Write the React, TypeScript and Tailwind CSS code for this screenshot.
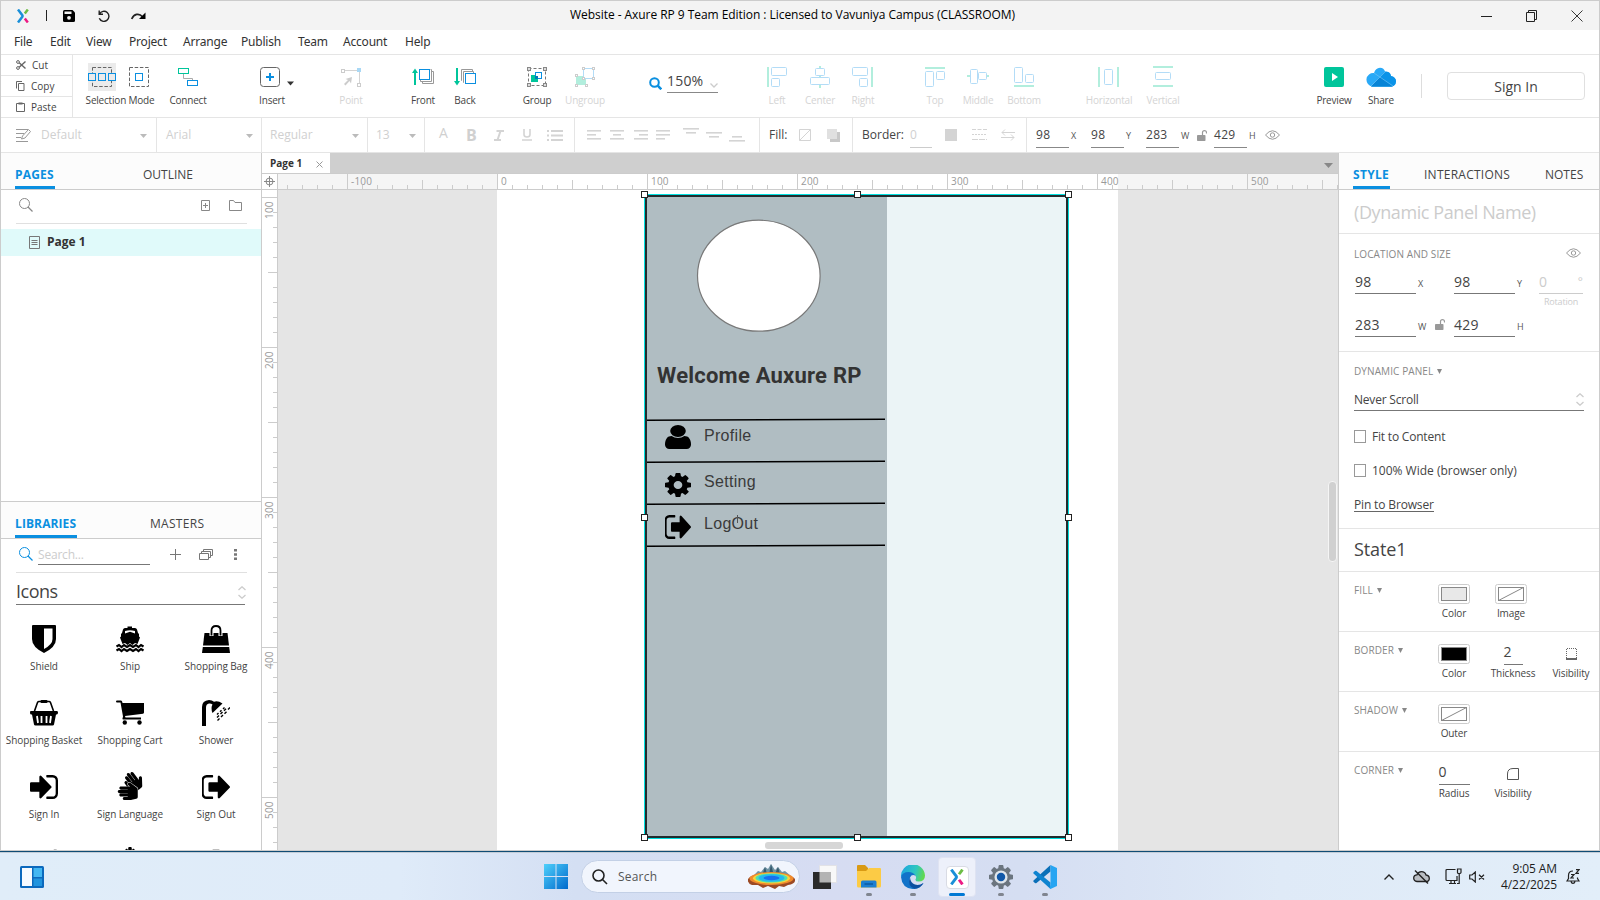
import type { ReactNode } from "react";
import { FaSignLanguage, FaSignal, FaSnowflake, FaSitemap } from "react-icons/fa";

const USER =
  "M1536 1399q0 109-62.5 187t-150.5 78h-854q-88 0-150.5-78t-62.5-187q0-85 8.5-160.5t31.5-152 58.5-131 94-89 134.5-34.5q131 128 313 128t313-128q76 0 134.5 34.5t94 89 58.5 131 31.5 152 8.5 160.5zm-256-887q0 159-112.5 271.5t-271.5 112.5-271.5-112.5-112.5-271.5 112.5-271.5 271.5-112.5 271.5 112.5 112.5 271.5z";
const COG =
  "M1152 896q0-106-75-181t-181-75-181 75-75 181 75 181 181 75 181-75 75-181zm512-109v222q0 12-8 23t-20 13l-185 28q-19 54-39 91 35 50 107 138 10 12 10 25t-9 23q-27 37-99 108t-94 71q-12 0-26-9l-138-108q-44 23-91 38-16 136-29 186-7 28-36 28h-222q-14 0-24.5-8.5t-11.5-21.5l-28-184q-49-16-90-37l-141 107q-10 9-25 9-14 0-25-11-126-114-165-168-7-10-7-23 0-12 8-23 15-21 51-66.5t54-70.5q-27-50-41-99l-183-27q-13-2-21-12.5t-8-23.5v-222q0-12 8-23t19-13l186-28q14-46 39-92-40-57-107-138-10-12-10-24 0-10 9-23 26-36 98.5-107.5t94.5-71.5q13 0 26 10l138 107q44-23 91-38 16-136 29-186 7-28 36-28h222q14 0 24.5 8.5t11.5 21.5l28 184q49 16 90 37l142-107q9-9 24-9 13 0 25 10 129 119 165 170 7 8 7 22 0 12-8 23-15 21-51 66.5t-54 70.5q26 50 41 98l183 28q13 2 21 12.5t8 23.5z";
const SIGN_OUT =
  "M704 1440q0 4 1 20t.5 26.5-3 23.5-10 19.5-20.5 6.5h-320q-119 0-203.5-84.5t-84.5-203.5v-704q0-119 84.5-203.5t203.5-84.5h320q13 0 22.5 9.5t9.5 22.5q0 4 1 20t.5 26.5-3 23.5-10 19.5-20.5 6.5h-320q-66 0-113 47t-47 113v704q0 66 47 113t113 47h312l11.5 1 11.5 3 8 5.5 7 9 2 13.5zm928-544q0 26-19 45l-544 544q-19 19-45 19t-45-19-19-45v-288h-448q-26 0-45-19t-19-45v-384q0-26 19-45t45-19h448v-288q0-26 19-45t45-19 45 19l544 544q19 19 19 45z";
const SIGN_IN =
  "M1312 896q0 26-19 45l-544 544q-19 19-45 19t-45-19-19-45v-288h-448q-26 0-45-19t-19-45v-384q0-26 19-45t45-19h448v-288q0-26 19-45t45-19 45 19l544 544q19 19 19 45zm352-352v704q0 119-84.5 203.5t-203.5 84.5h-320q-13 0-22.5-9.5t-9.5-22.5q0-4-1-20t-.5-26.5 3-23.5 10-19.5 20.5-6.5h320q66 0 113-47t47-113v-704q0-66-47-113t-113-47h-312l-11.5-1-11.5-3-8-5.5-7-9-2-13.5q0-4-1-20t-.5-26.5 3-23.5 10-19.5 20.5-6.5h320q119 0 203.5 84.5t84.5 203.5z";

function Glyph({ d, box, className }: { d: string; box: string; className: string }) {
  return (
    <svg viewBox={box} preserveAspectRatio="none" className={className} fill="currentColor">
      <path d={d} />
    </svg>
  );
}

function AxureMark({ className }: { className: string }) {
  return (
    <svg viewBox="0 0 12 14" className={className} fill="none" strokeWidth="2.5">
      <path d="M1 0.5L5.3 6.2Q5.8 7 5.3 7.8L1 13.5" stroke="#1a8fd8" />
      <path d="M10.8 0.5L7.8 4.6" stroke="#6cbd45" />
      <path d="M7.8 9.4L10.8 13.5" stroke="#ec1a84" />
    </svg>
  );
}

/* ---------- title + menu ---------- */

function TitleBar() {
  return (
    <div className="relative flex h-[29px] shrink-0 items-center bg-[#f3f3f3]">
      <AxureMark className="ml-4 h-[14px] w-3" />
      <div className="ml-[17px] h-[11px] w-px bg-[#222]" />
      <svg viewBox="0 0 12 12" className="ml-4 h-3 w-3">
        <path d="M1.5 0H9.5L12 2.5V10.5Q12 12 10.5 12H1.5Q0 12 0 10.5V1.5Q0 0 1.5 0Z" fill="#000" />
        <rect x="1.5" y="1.5" width="7" height="2.5" fill="#f3f3f3" />
        <circle cx="6" cy="7.8" r="1.9" fill="#f3f3f3" />
      </svg>
      <svg viewBox="0 0 12 12" className="ml-[23px] h-3 w-3" fill="none" stroke="#222" strokeWidth="1.4">
        <path d="M1.2 0.5V4.2H5M1.5 4A5 5 0 1 1 1.3 8.2" />
      </svg>
      <svg viewBox="0 0 15 8" className="ml-[21px] h-2 w-[15px]">
        <path d="M0.7 7C3 2 8 0.6 11.5 4.8" fill="none" stroke="#222" strokeWidth="1.7" />
        <path d="M14.5 0.5V7H8Z" fill="#000" />
      </svg>
      <div className="absolute inset-x-0 top-[6px] flex justify-center pr-[15px] text-[12px] leading-[16px] tracking-[-0.05px] text-black">
        Website - Axure RP 9 Team Edition : Licensed to Vavuniya Campus (CLASSROOM)
      </div>
      <svg viewBox="0 0 102 12" className="mr-[16px] ml-auto h-3 w-[102px]" fill="none" stroke="#222">
        <path d="M0 6.5H11" />
        <path d="M45.5 2.5H53.5V11.5H45.5ZM47.5 2.5V0.5H55.5V9.5H53.5" />
        <path d="M90.5 0.5L101.5 11.5M101.5 0.5L90.5 11.5" strokeWidth="0.9" />
      </svg>
    </div>
  );
}

const MENU: [string, string][] = [
  ["File", "w-9"],
  ["Edit", "w-9"],
  ["View", "w-[43px]"],
  ["Project", "w-[54px]"],
  ["Arrange", "w-[58px]"],
  ["Publish", "w-[57px]"],
  ["Team", "w-[45px]"],
  ["Account", "w-[62px]"],
  ["Help", "w-10"],
];

function MenuBar() {
  return (
    <div className="flex h-[25px] shrink-0 items-center border-b border-[#e5e5e5] pl-[13px] text-[12px] leading-4 tracking-[-0.2px] text-[#333]">
      {MENU.map(([m, w]) => (
        <div key={m} className={`${w} font-['Noto_Sans']`}>
          {m}
        </div>
      ))}
    </div>
  );
}

/* ---------- toolbar ---------- */

function Tool({ label, ml, off, w = "w-10", children }: { label: string; ml: string; off?: boolean; w?: string; children: ReactNode }) {
  return (
    <div className={`flex ${w} ${ml} shrink-0 flex-col items-center pt-2`}>
      <div className="flex h-7 items-center justify-center">{children}</div>
      <div className={`mt-[2px] text-[10px] leading-[14px] tracking-[-0.2px] whitespace-nowrap ${off ? "text-[#d4d4d4]" : "text-[#444]"}`}>
        {label}
      </div>
    </div>
  );
}

const B = "#b3dcf7";
const G = "#b2eedd";

function AlignIcon({ bars, boxes }: { bars: number[][]; boxes: number[][] }) {
  return (
    <svg viewBox="0 0 22 22" className="h-[22px] w-[22px] shrink-0">
      {bars.map(([x, y, w, h], i) => (
        <rect key={i} x={x} y={y} width={w} height={h} fill={G} />
      ))}
      {boxes.map(([x, y, w, h], i) => (
        <rect key={i} x={x + 0.5} y={y + 0.5} width={w - 1} height={h - 1} rx="1" fill="#fff" stroke={B} />
      ))}
    </svg>
  );
}

function Toolbar() {
  return (
    <div className="flex h-[63px] shrink-0 border-b border-[#e5e5e5]">
      <div className="flex w-[72px] flex-col border-r border-[#e5e5e5] text-[10px] leading-none text-[#444]">
        <div className="flex h-[21px] items-center border-b border-[#e5e5e5] pb-px pl-[15px]">
          <svg viewBox="0 0 10 10" className="h-[10px] w-[10px]" fill="none" stroke="#666">
            <circle cx="2" cy="2" r="1.4" />
            <circle cx="2" cy="8" r="1.4" />
            <path d="M3.2 2.8L9.5 8.6M3.2 7.2L9.5 1.4" strokeWidth="1.4" />
          </svg>
          <span className="ml-[6px]">Cut</span>
        </div>
        <div className="flex h-[21px] items-center border-b border-[#e5e5e5] pb-px pl-[15px]">
          <svg viewBox="0 0 9 10" className="h-[10px] w-[9px]" fill="none" stroke="#666">
            <path d="M0.5 7.5V0.5H6M2.5 2.5H8V9.5H2.5Z" />
          </svg>
          <span className="ml-[6px]">Copy</span>
        </div>
        <div className="flex h-[20px] items-center pb-px pl-[15px]">
          <svg viewBox="0 0 9 10" className="h-[10px] w-[9px]" fill="none" stroke="#666">
            <path d="M0.5 1.5H8.5V9.5H0.5Z" />
            <path d="M2.5 1.5H6.5" strokeWidth="2" />
          </svg>
          <span className="ml-[6px]">Paste</span>
        </div>
      </div>

      <Tool label="Selection Mode" ml="ml-0" w="w-[94px]">
        <svg viewBox="0 0 62 28" className="mr-[2px] h-7 w-[62px]" fill="none">
          <rect width="28" height="28" fill="#ebebeb" />
          <rect x="4.5" y="4.5" width="19" height="19" stroke="#666" strokeDasharray="3.5 1.7" />
          <g stroke="#0a8fe0" fill="#ebebeb">
            <rect x="0.5" y="10.5" width="7" height="7" />
            <rect x="10.5" y="10.5" width="7" height="7" />
            <rect x="20.5" y="10.5" width="7" height="7" />
          </g>
          <rect x="41.5" y="4.5" width="19" height="19" stroke="#666" strokeDasharray="3.5 1.7" />
          <rect x="47.5" y="10.5" width="7" height="7" stroke="#0a8fe0" />
        </svg>
      </Tool>
      <Tool label="Connect" ml="ml-[1px]">
        <svg viewBox="0 0 20 18" className="h-[18px] w-5" fill="none">
          <path d="M5.5 6V10.5H14.5V13" stroke="#aaa" />
          <rect x="0.5" y="0.5" width="10" height="5" stroke="#00c59b" />
          <rect x="9.5" y="12.5" width="10" height="5" stroke="#0a8fe0" />
        </svg>
      </Tool>
      <Tool label="Insert" ml="ml-[44px]">
        <svg viewBox="0 0 38 20" className="ml-[14px] h-5 w-[38px] shrink-0" fill="none">
          <rect x="0.5" y="0.5" width="19" height="19" rx="3" stroke="#666" />
          <path d="M6 10H14M10 6V14" stroke="#0a8fe0" strokeWidth="2" />
          <path d="M27 14.5H34L30.5 18.5Z" fill="#333" />
        </svg>
      </Tool>
      <Tool label="Point" ml="ml-[39px]" off>
        <svg viewBox="0 0 21 19" className="h-[19px] w-[21px]" fill="none">
          <path d="M4 2.5H17M18.5 4V15" stroke="#d4d4d4" />
          <rect x="0.5" y="1.5" width="3" height="3" stroke="#ccc" />
          <rect x="16.5" y="15.5" width="3" height="3" stroke="#ccc" />
          <rect x="16" y="0" width="4" height="4" fill="#a9d8f5" />
          <path d="M3 16L7 12L4.5 11L11 9L10 15.5L8.5 13L4.5 17.5Z" fill="#ccc" />
        </svg>
      </Tool>
      <Tool label="Front" ml="ml-[32px]">
        <svg viewBox="0 0 22 18" className="h-[18px] w-[22px]" fill="none">
          <path d="M3 17V4" stroke="#00c59b" strokeWidth="2" />
          <path d="M0 5L3 0.5L6 5Z" fill="#00c59b" />
          <path d="M19.5 3.5H21.5V15.5H10.5V13.5M18.5 1.5H19.5V13.5H8.5V12" stroke="#999" />
          <rect x="7.5" y="1.5" width="10" height="10" fill="#fff" stroke="#0a8fe0" />
        </svg>
      </Tool>
      <Tool label="Back" ml="ml-[2px]">
        <svg viewBox="0 0 22 18" className="h-[18px] w-[22px]" fill="none">
          <path d="M3 0V14" stroke="#00c59b" strokeWidth="2" />
          <path d="M0 13L3 17.5L6 13Z" fill="#00c59b" />
          <path d="M8 12.5H7.5V1.5H18.5V3M10 14.5H9.5V3.5H19.5V5" stroke="#999" />
          <rect x="11.5" y="5.5" width="10" height="10" fill="#fff" stroke="#0a8fe0" />
        </svg>
      </Tool>
      <Tool label="Group" ml="ml-[32px]">
        <svg viewBox="0 0 20 20" className="h-5 w-5" fill="none">
          <rect x="1.5" y="1.5" width="17" height="17" stroke="#777" strokeDasharray="3 2" />
          <g fill="#ddd" stroke="#888">
            <rect x="0.5" y="0.5" width="3" height="3" />
            <rect x="16.5" y="0.5" width="3" height="3" />
            <rect x="0.5" y="16.5" width="3" height="3" />
            <rect x="16.5" y="16.5" width="3" height="3" />
          </g>
          <rect x="4" y="8" width="7" height="7" fill="#00c59b" />
          <rect x="8.5" y="5.5" width="6" height="6" fill="#fff" stroke="#0a8fe0" />
          <rect x="8" y="9" width="3" height="3" fill="#007bb8" />
        </svg>
      </Tool>
      <Tool label="Ungroup" ml="ml-[8px]" off>
        <svg viewBox="0 0 20 20" className="h-5 w-5" fill="none">
          <rect x="1" y="9" width="10" height="9" fill={G} />
          <rect x="8.5" y="1.5" width="10" height="10" fill="#fff" stroke={B} />
          <g fill="#fff" stroke="#ccc">
            <rect x="7.5" y="0.5" width="2" height="2" />
            <rect x="17.5" y="0.5" width="2" height="2" />
            <rect x="17.5" y="10.5" width="2" height="2" />
            <rect x="7.5" y="10.5" width="2" height="2" />
            <rect x="0.5" y="7.5" width="2" height="2" />
            <rect x="0.5" y="17.5" width="2" height="2" />
            <rect x="10.5" y="17.5" width="2" height="2" />
          </g>
        </svg>
      </Tool>

      <div className="ml-[44px] flex w-[70px] shrink-0 pt-[15px]">
        <svg viewBox="0 0 13 13" className="mt-[7px] h-[13px] w-[13px] shrink-0" fill="none" stroke="#0a8fe0">
          <circle cx="5.5" cy="5.5" r="4.3" strokeWidth="2" />
          <path d="M8.7 8.7L12.3 12.3" strokeWidth="2.5" />
        </svg>
        <div className="ml-[5px] flex h-[23px] w-[51px] items-center border-b border-[#888] text-[14px] leading-none tracking-[0.2px] text-[#444]">
          <span>150%</span>
          <svg viewBox="0 0 8 5" className="mt-2 ml-auto h-[5px] w-2" fill="none" stroke="#ccc" strokeWidth="1.3">
            <path d="M0.5 0.5L4 4L7.5 0.5" />
          </svg>
        </div>
      </div>

      <Tool label="Left" ml="ml-[38px]" off>
        <AlignIcon bars={[[1, 1, 2, 20]]} boxes={[[5, 1, 16, 9], [5, 12, 9, 9]]} />
      </Tool>
      <Tool label="Center" ml="ml-[3px]" off>
        <AlignIcon bars={[[10, 0, 2, 22]]} boxes={[[6, 2, 10, 8], [1, 11, 20, 8]]} />
      </Tool>
      <Tool label="Right" ml="ml-[3px]" off>
        <AlignIcon bars={[[19, 1, 2, 20]]} boxes={[[0, 1, 16, 9], [7, 12, 9, 9]]} />
      </Tool>
      <Tool label="Top" ml="ml-[32px]" off>
        <AlignIcon bars={[[1, 1, 20, 2]]} boxes={[[1, 5, 9, 16], [12, 5, 9, 9]]} />
      </Tool>
      <Tool label="Middle" ml="ml-[3px]" off>
        <AlignIcon bars={[[0, 9, 22, 2]]} boxes={[[3, 3, 8, 15], [11, 6, 9, 8]]} />
      </Tool>
      <Tool label="Bottom" ml="ml-[6px]" off>
        <AlignIcon bars={[[1, 19, 20, 2]]} boxes={[[1, 1, 9, 16], [12, 8, 9, 9]]} />
      </Tool>
      <Tool label="Horizontal" ml="ml-[45px]" off>
        <AlignIcon bars={[[0, 1, 2, 20], [19, 1, 2, 20]]} boxes={[[6, 3, 9, 16]]} />
      </Tool>
      <Tool label="Vertical" ml="ml-[14px]" off>
        <AlignIcon bars={[[1, 0, 20, 2], [1, 19, 20, 2]]} boxes={[[3, 6, 16, 8]]} />
      </Tool>
      <Tool label="Preview" ml="ml-[131px]">
        <svg viewBox="0 0 20 20" className="h-5 w-5">
          <rect width="20" height="20" rx="2" fill="#00c59b" />
          <path d="M8 6L14 10L8 14Z" fill="#fff" />
        </svg>
      </Tool>
      <Tool label="Share" ml="ml-[7px]">
        <svg viewBox="0 0 30 20" className="h-5 w-[30px]">
          <path d="M6.5 19.5A6.5 6.5 0 0 1 8 6Q9.500 1 14 0.800Q18 1 19 4.600Q24 4.500 25 9Q30 10 30 14.500Q29.500 19 25.500 19.500Z" fill="#29a9f7" />
          <path d="M5 19.5L18.5 5Q24 4 25 9Q30 10 30 14.5Q29.5 19 25.5 19.5Z" fill="#0a93e8" />
          <path d="M14 10L27 19.5H5Z" fill="#0784d6" />
          <path d="M8 6L27 19" stroke="#7cc8f5" strokeWidth="0.6" />
          <path d="M5 19L19 5" stroke="#7cc8f5" strokeWidth="0.6" />
        </svg>
      </Tool>
      <div className="mt-[19px] ml-[20px] h-6 w-px shrink-0 bg-[#ddd]" />
      <div className="mt-[17px] ml-[25px] flex h-7 w-[138px] shrink-0 items-center justify-center rounded border border-[#e0e0e0] text-[14px] text-[#444]">
        Sign In
      </div>
    </div>
  );
}

/* ---------- style bar ---------- */

function Caret({ className = "" }: { className?: string }) {
  return (
    <svg viewBox="0 0 7 4" className={`mt-[2px] h-1 w-[7px] shrink-0 ${className}`}>
      <path d="M0 0H7L3.5 4Z" fill="#bbb" />
    </svg>
  );
}

function Lines({ rows, ml }: { rows: number[][]; ml: string }) {
  return (
    <svg viewBox="0 0 16 14" className={`h-[14px] w-4 shrink-0 ${ml}`}>
      {rows.map(([x, y, w], i) => (
        <rect key={i} x={x} y={y} width={w} height="1.6" fill="#d4d4d4" />
      ))}
    </svg>
  );
}

function Lock({ className = "" }: { className?: string }) {
  return (
    <svg viewBox="0 0 10 11" className={`h-[11px] w-[10px] shrink-0 ${className}`}>
      <rect x="0" y="5" width="8.500" height="6" rx="0.8" fill="#999" />
      <path d="M5.5 5V2.5Q5.5 0.7 7.5 0.7T9.5 2.5V3.5" fill="none" stroke="#999" strokeWidth="1.2" />
    </svg>
  );
}

function Eye({ className = "" }: { className?: string }) {
  return (
    <svg viewBox="0 0 15 10" className={`h-[10px] w-[15px] shrink-0 ${className}`} fill="none" stroke="#999">
      <path d="M0.5 5Q7.5 -3.5 14.5 5Q7.5 13.5 0.5 5Z" />
      <circle cx="7.5" cy="5" r="2.2" />
    </svg>
  );
}

function SmallField({ v, u, ml, w }: { v: string; u: string; ml: string; w: string }) {
  return (
    <div className={`flex items-center ${ml} ${w} shrink-0`}>
      <div className="mt-[7px] h-[19px] w-[33px] border-b border-[#888] text-[12px] leading-[12px] tracking-[0.3px] text-[#444]">{v}</div>
      <span className="ml-[2px] text-[9px] leading-none text-[#555]">{u}</span>
    </div>
  );
}

const SEC = "flex h-full shrink-0 items-center border-r border-[#e5e5e5]";

function StyleBar() {
  return (
    <div className="flex h-[35px] shrink-0 items-center border-b border-[#e5e5e5] text-[12px] leading-none text-[#d0d0d0]">
      <div className={`${SEC} w-[156px]`}>
        <svg viewBox="0 0 16 14" className="ml-[15px] h-[14px] w-4" fill="none" stroke="#999">
          <path d="M0 1.5H12M0 5.5H8M0 9.5H5M0 13.5H12" />
          <path d="M5.500 11L6.5 8L12.5 1.5L14.500 3.500L9 10Z" fill="#fff" />
        </svg>
        <span className="-mt-px ml-[9px]">Default</span>
        <Caret className="mr-[9px] ml-auto" />
      </div>
      <div className={`${SEC} w-[105px]`}>
        <span className="-mt-px ml-[9px]">Arial</span>
        <Caret className="mr-[8px] ml-auto" />
      </div>
      <div className={`${SEC} w-[106px]`}>
        <span className="-mt-px ml-[8px]">Regular</span>
        <Caret className="mr-[8px] ml-auto" />
      </div>
      <div className={`${SEC} w-[57px]`}>
        <span className="-mt-px ml-[8px]">13</span>
        <Caret className="mr-[8px] ml-auto" />
      </div>
      <div className={`${SEC} w-[150px] text-[16px]`}>
        <span className="-mt-[4px] ml-[14px] w-[27px] text-[14px]">A</span>
        <span className="w-[28px] text-[16px] font-bold">B</span>
        <svg viewBox="0 0 10 11" className="h-[11px] w-[10px] shrink-0" fill="none" stroke="#d4d4d4" strokeWidth="2">
          <path d="M2.5 1H10M0 10H7M6.5 1L3.5 10" />
        </svg>
        <svg viewBox="0 0 10 12" className="ml-[18px] h-3 w-[10px] shrink-0" fill="none" stroke="#d4d4d4" strokeWidth="1.6">
          <path d="M2 0V5.5Q2 8 5 8T8 5.5V0M0 11H10" />
        </svg>
        <svg viewBox="0 0 16 11" className="ml-[15px] h-[11px] w-4 shrink-0" fill="#d4d4d4">
          <path d="M0 0H2V2H0ZM0 4.5H2V6.5H0ZM0 9H2V11H0ZM4 0H16V2H4ZM4 4.5H16V6.5H4ZM4 9H16V11H4Z" />
        </svg>
      </div>
      <div className={`${SEC} w-[185px]`}>
        <Lines ml="ml-[12px]" rows={[[0, 2, 14], [0, 6, 9], [0, 10, 14]]} />
        <Lines ml="ml-[7px]" rows={[[0, 2, 14], [3, 6, 8], [0, 10, 14]]} />
        <Lines ml="ml-[8px]" rows={[[0, 2, 14], [5, 6, 9], [0, 10, 14]]} />
        <Lines ml="ml-[6px]" rows={[[0, 2, 14], [0, 6, 14], [0, 10, 9]]} />
        <Lines ml="ml-[11px]" rows={[[0, 0, 16], [3, 4, 10]]} />
        <Lines ml="ml-[7px]" rows={[[0, 4, 16], [3, 8, 10]]} />
        <Lines ml="ml-[7px]" rows={[[3, 8, 10], [0, 12, 16]]} />
      </div>
      <div className={`${SEC} w-[93px]`}>
        <span className="ml-[9px] w-[30px] text-[#444]">Fill:</span>
        <svg viewBox="0 0 12 12" className="h-3 w-3" fill="none" stroke="#d4d4d4">
          <path d="M0.5 0.5H11.5V11.5H0.5ZM0.5 11.5L11.5 0.5" />
        </svg>
        <svg viewBox="0 0 13 13" className="ml-[16px] h-[13px] w-[13px]">
          <rect x="3" y="3" width="10" height="10" fill="#c8c8c8" />
          <rect width="10" height="10" fill="#e0e0e0" />
        </svg>
      </div>
      <div className={`${SEC} w-[174px]`}>
        <span className="ml-[9px] w-[48px] text-[#444]">Border:</span>
        <div className="mt-[7px] h-[19px] w-[22px] border-b border-[#ccc] leading-[12px]">0</div>
        <div className="ml-[13px] h-3 w-3 bg-[#d4d4d4]" />
        <svg viewBox="0 0 15 12" className="ml-[15px] h-3 w-[15px]" stroke="#d4d4d4">
          <path d="M0 0.5H15" strokeDasharray="4 1.5" />
          <path d="M0 5.5H15" strokeDasharray="2 1" />
          <path d="M0 10.5H15" strokeDasharray="6 1" />
        </svg>
        <svg viewBox="0 0 14 12" className="ml-[14px] h-3 w-[14px]" fill="none" stroke="#d4d4d4">
          <path d="M14 3.5H1M4 0.5L1 3.5L4 6.5M0 8.5H13M10 5.5L13 8.5L10 11.5" />
        </svg>
      </div>
      <SmallField v="98" u="X" ml="ml-[9px]" w="w-[55px]" />
      <SmallField v="98" u="Y" ml="ml-0" w="w-[55px]" />
      <SmallField v="283" u="W" ml="ml-0" w="w-[51px]" />
      <Lock />
      <SmallField v="429" u="H" ml="ml-[7px]" w="w-[51px]" />
      <Eye />
    </div>
  );
}

/* ---------- left column ---------- */

function Magnifier({ color, className }: { color: string; className: string }) {
  return (
    <svg viewBox="0 0 14 14" className={`h-[14px] w-[14px] shrink-0 ${className}`} fill="none" stroke={color}>
      <circle cx="5.5" cy="5.5" r="5" />
      <path d="M9 9L13.5 13.5" strokeWidth="1.2" />
    </svg>
  );
}

function Spinner({ className = "" }: { className?: string }) {
  return (
    <svg viewBox="0 0 8 13" className={`h-[13px] w-2 shrink-0 ${className}`} fill="none" stroke="#ccc" strokeWidth="1.3">
      <path d="M0.5 4L4 0.8L7.5 4M0.5 9L4 12.2L7.5 9" />
    </svg>
  );
}

function Tab({ label, active, className }: { label: string; active?: boolean; className: string }) {
  return (
    <div className={`flex h-full items-center ${active ? "border-b-[3px] border-[#0a8fe0] pt-[10px] font-bold text-[#0a8fe0]" : "pt-[7px] text-[#444]"} ${className}`}>
      {label}
    </div>
  );
}

const ICONS: { name: string; icon: ReactNode }[] = [
  {
    name: "Shield",
    icon: (
      <svg viewBox="0 0 24 28" className="h-7 w-6">
        <path d="M1 0H23Q24 0 24 1V14Q24 22 12 28Q0 22 0 14V1Q0 0 1 0Z" />
        <path d="M12 3.5H20.5V14Q20.5 19.5 12 24Z" fill="#fff" />
      </svg>
    ),
  },
  {
    name: "Ship",
    icon: (
      <svg viewBox="0 0 28 28" className="h-7 w-7">
        <path d="M11.5 1.5H16V3H19Q20.500 3 21 4.5L22 8L23 9V11.500L24 12.5L21.500 19L19 18L16.500 20L14 18L11.500 20L9 18L6.500 19L4 12.5L5 11.5V9L6 8L7 4.5Q7.500 3 9 3H11.5ZM9 6V8.500L14 6.8L19 8.5V6Q14 4.500 9 6Z" />
        <path d="M0.5 21.5L3 20L5.5 22L8 20L11 22L14 20L17 22L20 20L22.500 22L25 20L27.5 21.5M0.5 25.5L3 24L5.5 26L8 24L11 26L14 24L17 26L20 24L22.5 26L25 24L27.5 25.5" fill="none" stroke="#000" strokeWidth="2.200" />
      </svg>
    ),
  },
  {
    name: "Shopping Bag",
    icon: (
      <svg viewBox="0 0 28 28" className="h-7 w-7">
        <path d="M2.5 8H25.5L27 20.5H1Z" />
        <path d="M0.8 22H27.2L28 28H0Z" />
        <path d="M9.5 11V5.5Q9.5 1 14 1T18.5 5.5V11" fill="none" stroke="#fff" strokeWidth="4" />
        <path d="M9.5 10.5V5.5Q9.5 1 14 1T18.5 5.5V10.5" fill="none" stroke="#000" strokeWidth="1.8" />
      </svg>
    ),
  },
  {
    name: "Shopping Basket",
    icon: (
      <svg viewBox="0 0 28 28" className="h-7 w-7">
        <path d="M4.5 12L7.5 3.5Q8 2.5 9 2.5H19Q20 2.5 20.5 3.5L23.5 12" fill="none" stroke="#000" strokeWidth="1.6" />
        <rect x="10.5" y="1" width="7" height="3" rx="1" />
        <path d="M1 12H27Q28 12 28 13.5T27 15.5H26L24 25.5Q23.8 26.5 22.5 26.5H5.5Q4.2 26.5 4 25.5L2 15.5H1Q0 15.5 0 13.5T1 12Z" />
        <path d="M7 17L8 24M11.5 17V24M16.5 17V24M21 17L20 24" stroke="#fff" strokeWidth="1.8" />
      </svg>
    ),
  },
  {
    name: "Shopping Cart",
    icon: (
      <svg viewBox="0 0 28 28" className="h-7 w-7">
        <path d="M0 2.5Q0 1.5 1 1.5H5Q6 1.5 6.3 3L6.5 4H28V13.5Q28 14.5 27 14.7L9 17L9.5 18.5H25V20.5H7Q6 20 7 17.5L4.5 3.5H1Q0 3.5 0 2.5Z" />
        <circle cx="8.8" cy="23.5" r="2.2" />
        <circle cx="23.5" cy="23.5" r="2.2" />
      </svg>
    ),
  },
  {
    name: "Shower",
    icon: (
      <svg viewBox="0 0 28 28" className="h-7 w-7">
        <path d="M0 27V8Q0 1.5 7 1Q10 1 12 2.8Q15.5 1 20.5 4.5L10.5 14Q8.5 9 10.5 5.5Q9 4.3 7 4.5Q4 5 4 8.5V27Z" />
        <path d="M15 15.500L16.500 14M18 12.800L19.500 11.300M21 10L22.500 8.500M15 18.500L17 16.5M18.500 15L20.5 13M22 11.8L24 9.800M15.5 21.500L17.5 19.5M19 18L21 16M22.500 14.8L24.500 12.8M26 10.5L28 8.5" stroke="#000" strokeWidth="1.4" />
      </svg>
    ),
  },
  { name: "Sign In", icon: <Glyph d={SIGN_IN} box="128 256 1536 1280" className="h-6 w-7" /> },
  { name: "Sign Language", icon: <FaSignLanguage className="-mt-[3px] h-7 w-7" /> },
  { name: "Sign Out", icon: <Glyph d={SIGN_OUT} box="96 256 1536 1280" className="h-6 w-7" /> },
  { name: "", icon: <FaSignal className="h-7 w-7" /> },
  { name: "", icon: <FaSnowflake className="h-7 w-7" /> },
  { name: "", icon: <FaSitemap className="h-7 w-7" /> },
];

function LeftColumn() {
  return (
    <div className="flex w-[261px] shrink-0 flex-col border-r border-[#ccc]">
      <div className="flex h-[37px] shrink-0 border-b border-[#ccc] bg-[#fcfcfc] text-[12px] leading-none">
        <Tab label="PAGES" active className="ml-[14px] w-10 tracking-[0.2px]" />
        <Tab label="OUTLINE" className="ml-[88px]" />
      </div>
      <div className="mr-[14px] ml-[15px] flex h-[34px] shrink-0 border-b border-[#e0e0e0]">
        <Magnifier color="#888" className="mt-2 ml-[3px]" />
        <svg viewBox="0 0 9 11" className="mt-[10px] ml-[168px] h-[11px] w-[9px]" fill="none" stroke="#888">
          <path d="M0.5 0.5H8.5V10.5H0.5ZM2 5.5H7M4.5 3V8" />
        </svg>
        <svg viewBox="0 0 13 11" className="mt-[10px] ml-[19px] h-[11px] w-[13px]" fill="none" stroke="#888">
          <path d="M0.5 0.5H4.5L6 2.5H12.5V10.5H0.5Z" />
        </svg>
      </div>
      <div className="mt-[5px] flex h-[27px] shrink-0 items-center bg-[#e0fafa] pb-px">
        <svg viewBox="0 0 11 13" className="ml-[28px] h-[13px] w-[11px]" fill="none" stroke="#777">
          <path d="M0.5 0.5H10.5V12.5H0.5ZM2.5 4.5H8.5M2.5 6.5H8.5M2.5 8.5H8.5" />
        </svg>
        <span className="ml-[7px] text-[12px] leading-none font-bold text-[#333]">Page 1</span>
      </div>
      <div className="h-[245px] shrink-0" />
      <div className="flex h-[38px] shrink-0 border-y border-[#ccc] bg-[#fcfcfc] text-[12px] leading-none">
        <Tab label="LIBRARIES" active className="ml-[14px] w-[62px] tracking-[0.1px]" />
        <Tab label="MASTERS" className="ml-[73px] tracking-[0.3px]" />
      </div>
      <div className="mr-[14px] ml-[15px] flex h-[34px] shrink-0 border-b border-[#e0e0e0]">
        <Magnifier color="#0a8fe0" className="mt-2 ml-[3px]" />
        <div className="ml-[5px] h-[26px] w-28 border-b border-[#777] pt-2 text-[12px] leading-4 tracking-[-0.2px] text-[#ccc]">Search...</div>
        <svg viewBox="0 0 11 11" className="mt-[10px] ml-5 h-[11px] w-[11px]" stroke="#777">
          <path d="M0 5.5H11M5.5 0V11" />
        </svg>
        <svg viewBox="0 0 14 11" className="mt-[10px] ml-[18px] h-[11px] w-[14px]" fill="none" stroke="#777">
          <path d="M0.5 4.5H9.5V10.5H0.5ZM2.5 4V2.5H11.5V8.5H10M4.5 2V0.5H13.5V6.5H12" />
        </svg>
        <svg viewBox="0 0 3 11" className="mt-[10px] ml-[21px] h-[11px] w-[3px]" fill="#777">
          <path d="M0 0H3V2.5H0ZM0 4.2H3V6.7H0ZM0 8.4H3V11H0Z" />
        </svg>
      </div>
      <div className="mr-4 ml-[15px] flex h-8 shrink-0 items-center border-b border-[#777]">
        <span className="mt-[4px] text-[18px] leading-none tracking-[-0.5px] text-[#444]">Icons</span>
        <Spinner className="mt-[7px] -mr-px ml-auto" />
      </div>
      <div className="grid min-h-0 flex-1 grid-cols-[84px_88px_84px] content-start overflow-hidden pt-[15px] pl-px">
        {ICONS.map((it, i) => (
          <div key={i} className="flex h-[74px] flex-col items-center pt-[5px]">
            <div className="flex h-7 items-center justify-center text-black">{it.icon}</div>
            <div className="mt-[6px] text-[10px] leading-[14px] tracking-[-0.1px] whitespace-nowrap text-[#444]">{it.name}</div>
          </div>
        ))}
      </div>
    </div>
  );
}

/* ---------- canvas ---------- */

const TICKS = Array.from({ length: 80 }, (_, i) => i);

function tickLength(n: number) {
  if (n % 10 === 0) return 15;
  return n % 5 === 0 ? 9 : 4;
}

function HorizontalRuler() {
  return (
    <svg viewBox="278 174 1060 15" className="h-[15px] w-[1060px] shrink-0" shapeRendering="crispEdges">
      <rect x="278" y="174" width="1060" height="15" fill="#f5f5f5" />
      <rect x="497" y="174" width="621" height="15" fill="#fff" />
      {TICKS.map((i) => {
        const n = i - 14;
        const x = 497 + n * 15;
        return x < 1338 ? <rect key={i} x={x} y={189 - tickLength(n)} width="1" height="15" fill="#ccc" /> : null;
      })}
      {[-100, 0, 100, 200, 300, 400, 500].map((v) => (
        <text key={v} x={501 + v * 1.5} y="185" fontSize="10" letterSpacing="0.2" fill="#999">
          {v}
        </text>
      ))}
    </svg>
  );
}

function VerticalRuler() {
  return (
    <svg viewBox="262 190 15 660" className="h-[660px] w-[15px] shrink-0">
      {TICKS.map((n) => {
        const y = 197 + n * 15;
        return y < 850 ? <rect key={n} x={277 - tickLength(n)} y={y} width="15" height="1" fill="#ccc" /> : null;
      })}
      {[100, 200, 300, 400, 500].map((v) => {
        const y = 219 + (v - 100) * 1.5;
        return (
          <text key={v} x="273" y={y} fontSize="10" letterSpacing="0.2" fill="#999" transform={`rotate(-90 273 ${y})`}>
            {v}
          </text>
        );
      })}
    </svg>
  );
}

const ROWS: { label: string; d: string; box: string; top: string; icon: string }[] = [
  { label: "Profile", d: USER, box: "256 128 1280 1536", top: "top-[237px]", icon: "top-[235px]" },
  { label: "Setting", d: COG, box: "128 128 1536 1536", top: "top-[283px]", icon: "top-[283px]" },
  { label: "LogOut", d: SIGN_OUT, box: "96 256 1536 1280", top: "top-[325px]", icon: "top-[325px]" },
];

const HANDLES = [
  "left-[363px] top-[1px]",
  "left-[576px] top-[1px]",
  "left-[787px] top-[1px]",
  "left-[363px] top-[324px]",
  "left-[787px] top-[324px]",
  "left-[363px] top-[644px]",
  "left-[576px] top-[644px]",
  "left-[787px] top-[644px]",
];

function Canvas() {
  return (
    <div className="relative h-[660px] w-[1060px] shrink-0 overflow-hidden bg-[#e5e5e5]">
      <div className="absolute top-0 left-[219px] h-[660px] w-[621px] bg-white" />
      <div className="absolute top-[4px] left-[366px] h-[645px] w-[425px] border border-[#00e0e0] bg-[#222c2e]">
        <div className="absolute inset-x-[2px] top-[2px] bottom-[2px] overflow-hidden bg-[#ebf4f6]">
          <div className="absolute top-0 left-0 h-full w-[240px] bg-[#b0bdc2]" />
          <svg viewBox="647 197 240 360" className="absolute top-0 left-0 h-[360px] w-[240px]" fill="none">
            <ellipse cx="758.8" cy="275.7" rx="61.3" ry="55.5" fill="#fff" stroke="#797979" strokeWidth="1.2" />
            <path d="M647 420.2L885 419.2M647 462.2L885 461.2M647 504.2L885 503.2M647 546.2L885 545.2" stroke="#000" strokeWidth="1.6" />
          </svg>
          <div className="absolute top-[165px] left-[10px] font-['Roboto'] text-[22px] leading-[28px] font-bold tracking-[0.22px] whitespace-nowrap text-[#333]">
            Welcome Auxure RP
          </div>
        </div>
      </div>
      {ROWS.map((r) => (
        <div key={r.label}>
          <Glyph d={r.d} box={r.box} className={`absolute left-[387px] h-6 w-[26px] text-black ${r.icon}`} />
          <div className={`absolute left-[426px] font-['Liberation_Sans'] text-[16px] leading-[18px] tracking-[0.3px] text-[#3a3a3a] ${r.top}`}>{r.label}</div>
        </div>
      ))}
      <div className="absolute top-[325px] left-[459px] h-2 w-px bg-[#555]" />
      {HANDLES.map((h) => (
        <div key={h} className={`absolute h-[7px] w-[7px] border border-[#222] bg-white ${h}`} />
      ))}
      <div className="absolute top-[652px] left-[487px] h-[7px] w-[78px] rounded-[3px] bg-[#d6d6d6]" />
      <div className="absolute top-[291px] left-[1050px] h-[81px] w-[9px] rounded border border-[#f5f5f5] bg-[#d0d0d0]" />
    </div>
  );
}

function Center() {
  return (
    <div className="flex w-[1076px] shrink-0 flex-col">
      <div className="flex h-[20px] shrink-0 items-stretch bg-[#cfcfcf]">
        <div className="flex w-[68px] items-center bg-white">
          <span className="ml-2 text-[10px] leading-none font-bold text-[#333]">Page 1</span>
          <svg viewBox="0 0 7 7" className="mt-[2px] ml-[14px] h-[7px] w-[7px]" stroke="#999">
            <path d="M0.5 0.5L6.5 6.5M6.5 0.5L0.5 6.5" />
          </svg>
        </div>
        <svg viewBox="0 0 9 5" className="mt-[10px] mr-[5px] ml-auto h-[5px] w-[9px]">
          <path d="M0 0H9L4.5 5Z" fill="#888" />
        </svg>
      </div>
      <div className="flex h-[17px] shrink-0 border-t border-b border-[#ccc]">
        <div className="flex h-[15px] w-4 items-center justify-center border-r border-[#ccc]">
          <svg viewBox="0 0 11 11" className="h-[11px] w-[11px]" fill="none" stroke="#888">
            <circle cx="5.5" cy="5.5" r="3.5" />
            <path d="M0 5.5H11M5.5 0V11" />
          </svg>
        </div>
        <HorizontalRuler />
      </div>
      <div className="flex">
        <div className="w-4 border-r border-[#ccc]">
          <VerticalRuler />
        </div>
        <Canvas />
      </div>
    </div>
  );
}

/* ---------- right column ---------- */

function Field({ v, w, unit }: { v: string; w: string; unit: string }) {
  return (
    <div className={`flex shrink-0 items-center ${w}`}>
      <div className="h-[21px] w-[61px] border-b border-[#777] text-[14px] leading-[17px] tracking-[0.2px] text-[#444]">{v}</div>
      <span className="ml-[2px] text-[9px] leading-none text-[#555]">{unit}</span>
    </div>
  );
}

function Heading({ text, className = "" }: { text: string; className?: string }) {
  return (
    <div className={`flex items-center text-[10px] leading-[14px] whitespace-nowrap text-[#888] ${className}`}>
      <span className="tracking-[0.1px]">{text}</span>
      <svg viewBox="0 0 5 5" className="ml-1 h-[5px] w-[5px] shrink-0">
        <path d="M0 0H5L2.5 5Z" fill="#888" />
      </svg>
    </div>
  );
}

function Swatch({ color, slash }: { color: string; slash?: boolean }) {
  return (
    <svg viewBox="0 0 32 20" className="h-5 w-8" fill="none">
      <rect x="0.5" y="0.5" width="31" height="19" rx="2" fill="#fff" stroke="#ccc" />
      <rect x="3.5" y="3.5" width="25" height="13" fill={color} stroke="#888" />
      {slash && <path d="M3.5 16.5L28.5 3.5" stroke="#888" />}
    </svg>
  );
}

function Prop({ label, w, children }: { label: string; w: string; children: ReactNode }) {
  return (
    <div className={`flex shrink-0 flex-col items-center ${w}`}>
      <div className="flex h-[22px] items-center justify-center">{children}</div>
      <div className="mt-px text-[10px] leading-[14px] tracking-[-0.1px] whitespace-nowrap text-[#444]">{label}</div>
    </div>
  );
}

function Section({ title, last, children }: { title: string; last?: boolean; children: ReactNode }) {
  return (
    <div className={`flex h-[60px] shrink-0 pt-[11px] ${last ? "" : "border-b border-[#e5e5e5]"}`}>
      <Heading text={title} className="h-[14px] w-[79px] pl-[15px]" />
      {children}
    </div>
  );
}

function RightColumn() {
  return (
    <div className="flex w-[261px] shrink-0 flex-col border-l border-[#ccc]">
      <div className="flex h-[37px] shrink-0 border-b border-[#ccc] bg-[#fcfcfc] text-[12px] leading-none">
        <Tab label="STYLE" active className="ml-[14px] w-[37px] tracking-[0.3px]" />
        <Tab label="INTERACTIONS" className="ml-[34px] w-[86px] tracking-[0.25px]" />
        <Tab label="NOTES" className="ml-[35px]" />
      </div>
      <div className="flex h-11 shrink-0 items-center border-b border-[#e5e5e5] pl-[15px] text-[18px] leading-none tracking-[-0.4px] whitespace-nowrap text-[#ccc]">
        (Dynamic Panel Name)
      </div>
      <div className="flex h-[118px] shrink-0 flex-col border-b border-[#e5e5e5] pl-[15px]">
        <div className="mt-[12px] flex h-[14px] items-center text-[10px] leading-none tracking-[0.1px] text-[#888]">
          <span className="mt-px">LOCATION AND SIZE</span>
          <Eye className="mr-[18px] ml-auto" />
        </div>
        <div className="mt-[13px] flex h-[21px] pl-[1px]">
          <Field v="98" unit="X" w="w-[99px]" />
          <Field v="98" unit="Y" w="w-[85px]" />
          <div className="relative flex h-[21px] w-[44px] justify-between border-b border-[#ccc] text-[14px] leading-[17px] text-[#ccc]">
            <span>0</span>
            <span className="text-[12px]">°</span>
            <span className="absolute top-[22px] right-0 left-0 text-center text-[9px] leading-[14px] tracking-[-0.2px]">Rotation</span>
          </div>
        </div>
        <div className="mt-[22px] flex h-[21px] items-center pl-[1px]">
          <Field v="283" unit="W" w="w-[80px]" />
          <Lock className="-mt-1 mr-[9px]" />
          <Field v="429" unit="H" w="w-[85px]" />
        </div>
      </div>
      <div className="flex h-[177px] shrink-0 flex-col border-b border-[#e5e5e5] pr-[15px] pl-[15px] text-[12px] leading-none text-[#444]">
        <Heading text="DYNAMIC PANEL" className="mt-[12px]" />
        <div className="mt-[11px] flex h-[22px] items-center border-b border-[#777]">
          <span className="mt-px tracking-[-0.2px]">Never Scroll</span>
          <Spinner className="ml-auto" />
        </div>
        <div className="mt-[19px] flex h-[13px] items-center">
          <div className="h-[13px] w-3 border border-[#999]" />
          <span className="mt-px ml-[6px] tracking-[-0.2px]">Fit to Content</span>
        </div>
        <div className="mt-[21px] flex h-[13px] items-center">
          <div className="h-[13px] w-3 border border-[#999]" />
          <span className="mt-px ml-[6px]">100% Wide (browser only)</span>
        </div>
        <div className="mt-[22px] flex">
          <span className="border-b border-[#666] leading-[12px] tracking-[-0.15px]">Pin to Browser</span>
        </div>
      </div>
      <div className="flex h-[43px] shrink-0 items-center border-b border-[#e5e5e5] pb-[3px] pl-[15px] text-[18px] leading-none tracking-[-0.1px] text-[#444]">
        State1
      </div>
      <Section title="FILL">
        <Prop label="Color" w="ml-5 w-8">
          <Swatch color="#e8e8e8" />
        </Prop>
        <Prop label="Image" w="ml-[25px] w-8">
          <Swatch color="#fff" slash />
        </Prop>
      </Section>
      <Section title="BORDER">
        <Prop label="Color" w="ml-5 w-8">
          <Swatch color="#000" />
        </Prop>
        <Prop label="Thickness" w="ml-[21px] w-[44px]">
          <div className="h-[21px] w-[19px] border-b border-[#777] text-[14px] leading-[16px] text-[#444]">2</div>
        </Prop>
        <Prop label="Visibility" w="ml-[16px] w-[40px]">
          <svg viewBox="0 0 11 12" className="h-3 w-[11px]" fill="none" stroke="#666">
            <path d="M0.5 10V0.5H10.5V10" strokeDasharray="1 1" />
            <path d="M0 11H11" strokeWidth="2" />
          </svg>
        </Prop>
      </Section>
      <Section title="SHADOW">
        <Prop label="Outer" w="ml-5 w-8">
          <Swatch color="#fff" slash />
        </Prop>
      </Section>
      <Section title="CORNER" last>
        <Prop label="Radius" w="ml-5 w-8">
          <div className="h-[21px] w-[31px] border-b border-[#777] text-[14px] leading-[16px] text-[#444]">0</div>
        </Prop>
        <Prop label="Visibility" w="ml-[23px] w-[40px]">
          <svg viewBox="0 0 12 12" className="h-3 w-3" fill="none" stroke="#555">
            <path d="M0.5 11.5V6Q0.5 0.5 6 0.5H11.5V11.5Z" />
          </svg>
        </Prop>
      </Section>
    </div>
  );
}

/* ---------- taskbar ---------- */

function TaskButton({ children, active, dot }: { children: ReactNode; active?: boolean; dot?: boolean }) {
  return (
    <div className={`ml-[6px] flex h-10 w-[38px] shrink-0 flex-col items-center rounded ${active ? "border border-[#dfe3f2] bg-[#edf0fa]" : ""}`}>
      <div className="mt-[7px] flex h-[26px] items-center">{children}</div>
      {(active || dot) && <div className={`mt-[3px] h-[3px] shrink-0 rounded-full ${active ? "w-4 bg-[#0078d4]" : "w-[6px] bg-[#80858f]"}`} />}
    </div>
  );
}

function Taskbar() {
  return (
    <div className="flex h-12 shrink-0 items-center border-t border-[#c3ccd6] bg-[linear-gradient(90deg,#e0edf9_0%,#dfebf9_25%,#d4dff3_36%,#d6dcf2_52%,#d5def2_64%,#dfeaf7_80%,#e2eef9_100%)]">
      <svg viewBox="0 0 24 22" className="ml-5 h-[22px] w-6">
        <rect width="24" height="22" rx="1.5" fill="#0c69bd" />
        <rect x="2" y="2" width="10" height="18" fill="#f7fbff" />
        <rect x="13.5" y="2" width="8.5" height="9" fill="#43b7f2" />
        <rect x="13.5" y="12.5" width="8.5" height="7.5" fill="#2094de" />
      </svg>
      <svg viewBox="0 0 24 25" className="ml-[500px] h-[25px] w-6">
        <defs>
          <linearGradient id="win" x1="0" y1="0" x2="1" y2="1">
            <stop offset="0" stopColor="#4fd0fb" />
            <stop offset="1" stopColor="#0069cc" />
          </linearGradient>
        </defs>
        <path d="M0 0H11.5V12H0ZM12.5 0H24V12H12.5ZM0 13H11.5V25H0ZM12.5 13H24V25H12.5Z" fill="url(#win)" />
      </svg>
      <div className="ml-[13px] flex h-[33px] w-[219px] shrink-0 items-center rounded-full border border-[#c3d0e6] bg-[#f1f5fd]">
        <svg viewBox="0 0 16 16" className="ml-[10px] h-4 w-4" fill="none" stroke="#222" strokeWidth="1.6">
          <circle cx="6.5" cy="6.5" r="5.5" />
          <path d="M10.5 10.5L15 15" />
        </svg>
        <span className="ml-[10px] text-[12px] tracking-[0.2px] text-[#555]">Search</span>
        <svg viewBox="0 0 47 25" className="mr-[4px] ml-auto h-[25px] w-[47px]">
          <path d="M5 12L10 7L13 8L17 3L20 5L23 0L27 6L30 3L34 8L37 7L43 12Z" fill="#6f93a3" />
          <path d="M17 3L19 10L14 12ZM23 0L25 8L21 11ZM30 3L32 10L27 10Z" fill="#35596e" />
          <path d="M0 15Q4 9 23 9T47 15Q48 20 40 21L36 23L31 22L27 25L20 22L15 24L10 21L4 21Q-1 19 0 15Z" fill="#9b4a25" />
          <ellipse cx="23.5" cy="14.5" rx="22" ry="6.5" fill="#f08a2c" />
          <ellipse cx="23.5" cy="14.2" rx="18.5" ry="5.3" fill="#f5d53c" />
          <ellipse cx="23.5" cy="14" rx="16" ry="4.6" fill="#4fe0b0" />
          <ellipse cx="23.5" cy="14" rx="13" ry="3.8" fill="#22b8f0" />
          <ellipse cx="23.5" cy="14" rx="8" ry="2.2" fill="#1770ee" />
        </svg>
      </div>
      <TaskButton>
        <svg viewBox="0 0 24 24" className="h-6 w-6">
          <rect x="6.5" y="0.5" width="17" height="17" fill="#f8f8f8" stroke="#e2e2e6" />
          <rect x="0" y="7" width="18" height="17" fill="#2a2a2a" />
          <rect x="6.5" y="7" width="11.5" height="10.5" fill="#b4b4b4" />
        </svg>
      </TaskButton>
      <TaskButton dot>
        <svg viewBox="0 0 24 23" className="h-[23px] w-6">
          <path d="M0 1Q0 0 1 0H8L11 3V8H0Z" fill="#d99a14" />
          <path d="M0 6H9L12 3H23Q24 3 24 4V21Q24 22.5 22.5 22.5H1.5Q0 22.5 0 21Z" fill="#fccb45" />
          <path d="M4 22.5V17Q4 15.5 5.5 15.5H18Q19.5 15.5 19.5 17V22.5Z" fill="#1d7fd1" />
          <path d="M7.5 19H16" stroke="#0d5aa0" strokeWidth="1.5" />
        </svg>
      </TaskButton>
      <TaskButton dot>
        <svg viewBox="0 0 24 24" className="h-6 w-6">
          <defs>
            <linearGradient id="edgeTop" x1="0" y1="0.3" x2="1" y2="0.5">
              <stop offset="0" stopColor="#1da6e0" />
              <stop offset="0.6" stopColor="#2fc6c0" />
              <stop offset="1" stopColor="#62da4c" />
            </linearGradient>
          </defs>
          <path d="M0 12A12 12 0 0 1 24 10.5Q24 16.5 17.5 16.5Q13.5 16.3 14.8 13.8Q16 11 12.5 9Q5 6 0 12Z" fill="url(#edgeTop)" />
          <path d="M0 12Q1.5 7 7.5 7Q12.5 7.2 14.8 11Q11 8.5 9 12.5Q7.5 19 14 20.5Q19 21.5 22.5 18Q18.5 24.5 11.5 24Q1 23 0 12Z" fill="#1273c9" />
          <path d="M9 12.5Q6 21 13.5 23.8Q19.5 23.5 22.5 18Q18 20.8 14 19.5Q9.5 18 9 12.5Z" fill="#0b4fa0" />
        </svg>
      </TaskButton>
      <TaskButton active>
        <div className="flex h-[23px] w-[23px] items-center justify-center rounded border border-[#d9dbe4] bg-white">
          <AxureMark className="h-4 w-[14px]" />
        </div>
      </TaskButton>
      <TaskButton dot>
        <svg viewBox="128 128 1536 1536" className="h-6 w-6">
          <path d={COG} fill="#6b757f" />
          <circle cx="896" cy="896" r="420" fill="#dfe6ec" />
          <circle cx="896" cy="896" r="270" fill="#1158a8" />
        </svg>
      </TaskButton>
      <TaskButton dot>
        <svg viewBox="0 0 24 24" className="h-6 w-6">
          <path d="M17.5 6.5L3.5 18Q2.8 18.6 2 18L0.5 16.7Q0 16 0.5 15.5L17.5 0Z" fill="#0b70b8" />
          <path d="M17.5 17.5L3.5 6Q2.8 5.4 2 6L0.5 7.3Q0 8 0.5 8.5L17.5 24Z" fill="#0f84d0" />
          <path d="M17.5 0L24 3V21L17.5 24Q16 23.5 17.5 20Z" fill="#27a5f2" />
        </svg>
      </TaskButton>
      <svg viewBox="0 0 10 6" className="ml-[320px] h-[6px] w-[10px]" fill="none" stroke="#222" strokeWidth="1.4">
        <path d="M0.5 5.5L5 1L9.5 5.5" />
      </svg>
      <svg viewBox="0 0 17 14" className="ml-[19px] h-[14px] w-[17px]">
        <path d="M4 11.5Q0.7 11 0.7 8T4 4.8Q5 1.7 8.5 1.7T13 5Q16.3 5.5 16.3 8.5T13 11.5Z" fill="#b9bdc2" stroke="#222" strokeWidth="1.3" />
        <path d="M2 0.5L15 13.5" stroke="#222" strokeWidth="1.4" />
      </svg>
      <svg viewBox="0 0 17 17" className="ml-[15px] h-[17px] w-[17px]" fill="none" stroke="#222" strokeWidth="1.2">
        <path d="M10.5 1.5H2Q1 1.5 1 2.5V11.5Q1 12.5 2 12.5H12V8M4 15.5H11M6 12.5V15.5M9.5 12.5V15.5" />
        <path d="M12.5 1H16V4.5Q16 5.5 14.2 5.5T12.5 4.5ZM14.2 5.5V15.5H12" />
      </svg>
      <svg viewBox="0 0 16 12" className="ml-[7px] h-3 w-4" fill="none" stroke="#222" strokeWidth="1.2">
        <path d="M0.7 4H3L6.3 1V11L3 8H0.7ZM10 3.7L15 8.5M15 3.7L10 8.5" />
      </svg>
      <div className="ml-[12px] flex w-[60px] flex-col items-end text-[12px] leading-4 tracking-[-0.1px] whitespace-nowrap text-[#1c1c1c]">
        <span>9:05 AM</span>
        <span>4/22/2025</span>
      </div>
      <svg viewBox="0 0 14 15" className="ml-[9px] h-[15px] w-[14px]" fill="none" stroke="#222" strokeWidth="1.2">
        <path d="M7 2Q2.5 2 2.5 6.5V9.5L1 12H13L11.5 9.5V8.5M5 12.5Q5.5 14.3 7 14.3T9 12.5M5 5.5H8L5 9H8M10 0.7H13L10 4.3H13" />
      </svg>
    </div>
  );
}

export default function App() {
  return (
    <div className="flex h-[900px] w-[1600px] flex-col overflow-hidden bg-white font-['Open_Sans','Noto_Sans',sans-serif]">
      <div className="flex h-[851px] shrink-0 flex-col overflow-hidden border border-[#ccc]">
        <TitleBar />
        <MenuBar />
        <Toolbar />
        <StyleBar />
        <div className="flex min-h-0 flex-1">
          <LeftColumn />
          <Center />
          <RightColumn />
        </div>
      </div>
      <div className="h-px shrink-0 bg-[#0f4c75]" />
      <Taskbar />
    </div>
  );
}
